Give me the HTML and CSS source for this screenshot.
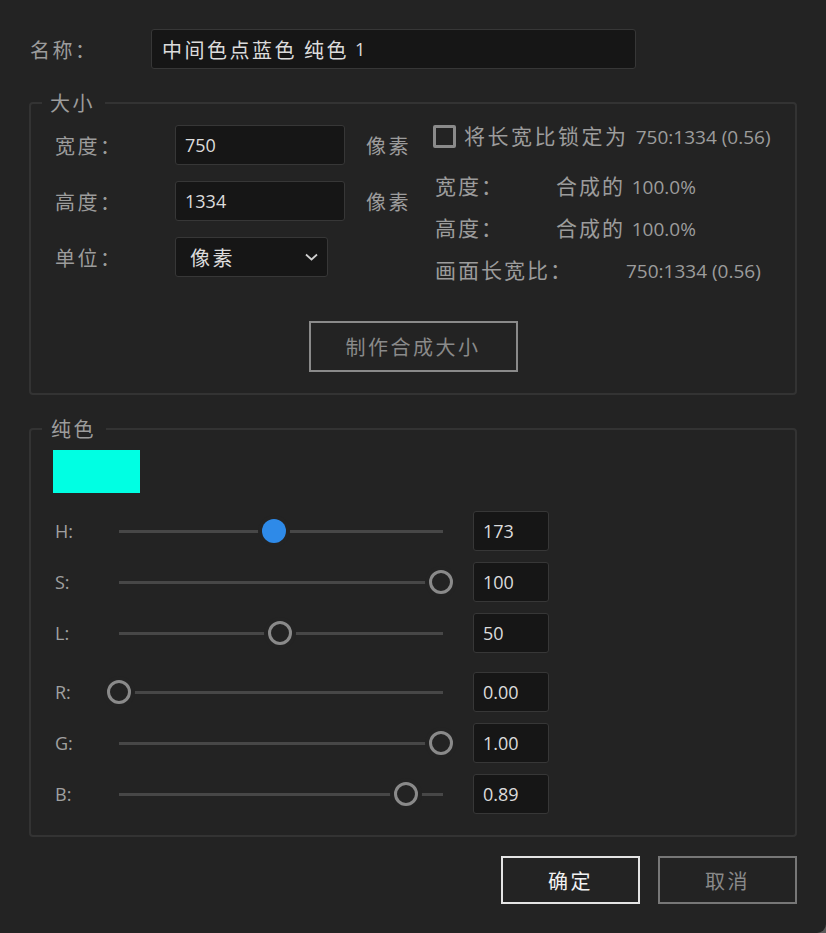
FILE: index.html
```html
<!DOCTYPE html>
<html lang="zh-CN">
<head>
<meta charset="utf-8">
<title>纯色设置</title>
<link rel="stylesheet" href="styles.css">
</head>
<body>
<div class="dialog">
  <div class="name-row">
    <span class="lbl name-lbl">名称：</span>
    <div class="field name-field">中间色点蓝色 纯色<span class="num sp">1</span></div>
  </div>

  <fieldset class="group size-group">
    <legend>大小</legend>
    <div class="size-body">
      <div class="dims">
        <span class="lbl">宽度：</span>
        <div class="field dim-field"><span class="num">750</span></div>
        <span class="lbl unit">像素</span>

        <span class="lbl">高度：</span>
        <div class="field dim-field"><span class="num">1334</span></div>
        <span class="lbl unit">像素</span>

        <span class="lbl">单位：</span>
        <div class="field select-field">
          <span>像素</span>
          <svg class="chev" width="13" height="8" viewBox="0 0 13 8"><path d="M1 1.5 L6.5 6.5 L12 1.5" fill="none" stroke="#d0d0d0" stroke-width="1.8"/></svg>
        </div>
        <span></span>
      </div>
      <div class="info">
        <div class="lock-row">
          <span class="checkbox"></span>
          <span class="lbl">将长宽比锁定为 <span class="num">750:1334 (0.56)</span></span>
        </div>
        <div class="info-row first"><span class="info-k">宽度：</span><span class="info-v">合成的 <span class="num">100.0%</span></span></div>
        <div class="info-row"><span class="info-k">高度：</span><span class="info-v">合成的 <span class="num">100.0%</span></span></div>
        <div class="info-row"><span class="info-k wide">画面长宽比：</span><span class="info-v"><span class="num">750:1334 (0.56)</span></span></div>
      </div>
    </div>
    <div class="make-row"><button class="btn make-btn">制作合成大小</button></div>
  </fieldset>

  <fieldset class="group color-group">
    <legend>纯色</legend>
    <div class="swatch"></div>
    <div class="sliders">
      <div class="srow"><span class="slbl">H:</span><div class="track"><span class="thumb active" style="--v:0.48"></span></div><div class="field val"><span class="num">173</span></div></div>
      <div class="srow"><span class="slbl">S:</span><div class="track"><span class="thumb" style="--v:1"></span></div><div class="field val"><span class="num">100</span></div></div>
      <div class="srow"><span class="slbl">L:</span><div class="track"><span class="thumb" style="--v:0.5"></span></div><div class="field val"><span class="num">50</span></div></div>
      <div class="srow rgb-start"><span class="slbl">R:</span><div class="track"><span class="thumb" style="--v:0"></span></div><div class="field val"><span class="num">0.00</span></div></div>
      <div class="srow"><span class="slbl">G:</span><div class="track"><span class="thumb" style="--v:1"></span></div><div class="field val"><span class="num">1.00</span></div></div>
      <div class="srow"><span class="slbl">B:</span><div class="track"><span class="thumb" style="--v:0.89"></span></div><div class="field val"><span class="num">0.89</span></div></div>
    </div>
  </fieldset>

  <div class="actions">
    <button class="btn ok-btn">确定</button>
    <button class="btn cancel-btn">取消</button>
  </div>
</div>
</body>
</html>
```

FILE: styles.css
```css
html {
  background: #5a5a5a;
}
body {
  margin: 0;
  font-family: "Noto Sans CJK SC", sans-serif;
  font-size: 20px;
  color: #9c9c9c;
}
.dialog {
  width: 826px;
  height: 933px;
  box-sizing: border-box;
  background: #232323;
  border-bottom-right-radius: 9px;
  padding-top: 29px;
  overflow: hidden;
}
.lbl {
  letter-spacing: 2.5px;
  color: #9c9c9c;
  white-space: nowrap;
}
.num {
  font-family: "Open Sans", "Noto Sans", sans-serif;
  font-size: 18px;
  letter-spacing: 0;
}
.num.sp {
  margin-left: 6px;
}
.field {
  box-sizing: border-box;
  height: 40px;
  background: #161616;
  border: 1px solid #373737;
  border-radius: 3px;
  display: flex;
  align-items: center;
  color: #dcdcdc;
  letter-spacing: 2.5px;
  white-space: nowrap;
}
.name-row {
  display: flex;
  align-items: center;
  padding-left: 30px;
}
.name-lbl {
  width: 121px;
}
.name-field {
  width: 485px;
  padding-left: 10px;
}

.group {
  margin: 22px 29px 0;
  border: 2px solid #333333;
  border-radius: 4px;
  min-width: 0;
}
.group legend {
  font-size: 20px;
  line-height: 24px;
  letter-spacing: 2.5px;
  color: #9c9c9c;
}
.size-group {
  padding: 10px 24px 21px;
}
.size-group legend {
  margin-left: -13px;
  padding: 0 10px 0 8px;
}
.size-body {
  display: flex;
}
.dims {
  width: 378px;
  display: grid;
  grid-template-columns: 99px 170px auto;
  grid-auto-rows: 40px;
  column-gap: 21px;
  row-gap: 16px;
  align-items: center;
  align-self: flex-start;
}
.dim-field {
  padding-left: 9px;
}
.select-field {
  width: 153px;
  padding: 0 9px 0 14px;
  justify-content: space-between;
}
.info {
  display: flex;
  flex-direction: column;
  font-size: 21px;
  margin-top: -2px;
}
.info .num {
  font-size: 19px;
}
.lock-row {
  display: flex;
  align-items: center;
  height: 24px;
  gap: 8px;
}
.checkbox {
  box-sizing: border-box;
  width: 23px;
  height: 23px;
  border: 3px solid #8a8a8a;
  border-radius: 2px;
  margin-top: 2px;
}
.info-row {
  height: 24px;
  line-height: 24px;
  margin-top: 18px;
  padding-left: 2px;
  display: flex;
  white-space: nowrap;
  color: #9c9c9c;
}
.info-row.first {
  margin-top: 26px;
}
.info-k {
  width: 121px;
  letter-spacing: 2px;
}
.info-k.wide {
  width: 191px;
}
.info-v {
  letter-spacing: 2px;
}
.make-row {
  display: flex;
  justify-content: center;
  margin-top: 40px;
}
.btn {
  box-sizing: border-box;
  background: transparent;
  font-family: "Noto Sans CJK SC", sans-serif;
  font-size: 20px;
  letter-spacing: 2.5px;
  padding: 0;
  cursor: pointer;
}
.make-btn {
  width: 209px;
  height: 51px;
  border: 2px solid #8a8a8a;
  color: #8a8a8a;
}

.color-group {
  padding: 9px 22px 21px;
}
.color-group legend {
  margin-left: -11px;
  padding: 0 10px 0 9px;
}
.swatch {
  width: 87px;
  height: 43px;
  background: #00ffe3;
}
.sliders {
  margin-top: 18px;
  display: flex;
  flex-direction: column;
  gap: 11px;
}
.srow {
  display: flex;
  align-items: center;
  height: 40px;
}
.srow.rgb-start {
  margin-top: 8px;
}
.slbl {
  width: 64px;
  margin-left: 2px;
  font-family: "Open Sans", "Noto Sans", sans-serif;
  font-size: 18px;
  color: #a0a0a0;
}
.track {
  position: relative;
  width: 324px;
  height: 3px;
  background: #474747;
}
.thumb {
  position: absolute;
  top: 50%;
  left: calc(var(--v) * 322px - 12px);
  width: 24px;
  height: 24px;
  box-sizing: border-box;
  margin-top: -12px;
  border-radius: 50%;
  border: 3px solid #8a8a8a;
  background: #232323;
  box-shadow: 0 0 0 4px #232323;
}
.thumb.active {
  border: none;
  background: #2e8ae8;
}
.val {
  width: 76px;
  margin-left: 30px;
  padding-left: 9px;
}

.actions {
  display: flex;
  justify-content: flex-end;
  gap: 18px;
  margin-top: 19px;
  padding-right: 29px;
}
.ok-btn, .cancel-btn {
  width: 139px;
  height: 48px;
}
.ok-btn {
  border: 2px solid #e4e4e4;
  color: #f2f2f2;
}
.cancel-btn {
  border: 2px solid #777777;
  color: #8a8a8a;
}
```
